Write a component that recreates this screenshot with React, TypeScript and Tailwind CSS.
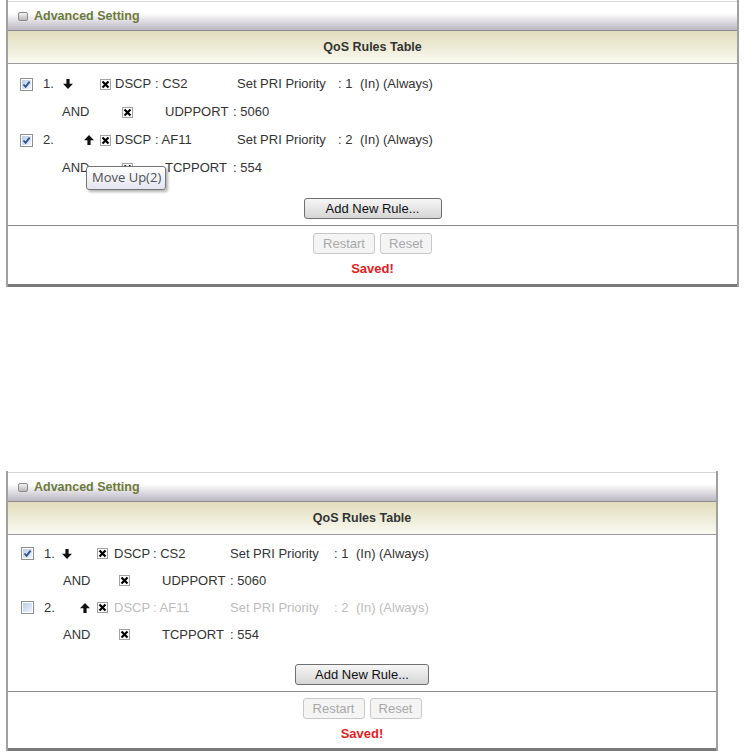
import React from "react";

const font = { fontFamily: '"Liberation Sans", Arial, sans-serif' };

function CheckBox({ checked }: { checked: boolean }) {
  return (
    <span className="relative inline-flex h-[13px] w-[13px] items-center justify-center border border-[#8e8f8f] bg-white">
      <span className="h-[9px] w-[9px] bg-gradient-to-br from-[#b9cfe6] to-[#eef4fb]" />
      {checked && (
        <svg className="absolute left-0 top-0" width="11" height="11" viewBox="0 0 11 11">
          <path d="M2.5 5.5 L4.6 7.8 L8.6 2.6" fill="none" stroke="#2c4f8f" strokeWidth="1.8" />
        </svg>
      )}
    </span>
  );
}

function XBox() {
  return (
    <svg width="11" height="11" viewBox="0 0 11 11" className="inline-block">
      <rect x="0.5" y="0.5" width="10" height="10" fill="#fff" stroke="#444" strokeWidth="1" strokeDasharray="1 1" />
      <path d="M2.5 2.5 L8.5 8.5 M8.5 2.5 L2.5 8.5" stroke="#000" strokeWidth="2.2" />
    </svg>
  );
}

function ArrowDown() {
  return (
    <svg width="10" height="10" viewBox="0 0 10 10" className="inline-block">
      <path d="M5 10 L0 4.8 H3.4 V0 H6.6 V4.8 H10 Z" fill="#111" />
    </svg>
  );
}

function ArrowUp() {
  return (
    <svg width="10" height="10" viewBox="0 0 10 10" className="inline-block">
      <path d="M5 0 L0 5.2 H3.4 V10 H6.6 V5.2 H10 Z" fill="#111" />
    </svg>
  );
}

type Cols = {
  row: string;
  pad: string;
  cb: string;
  num: string;
  down: string;
  up: string;
  x: string;
  label: string;
  value: string;
  spp: string;
  pv: string;
  inn: string;
  andPad: string;
  and: string;
  andX: string;
  port: string;
};

const topCols: Cols = {
  row: "h-[28px]",
  pad: "pl-[12px]",
  cb: "w-[23px]",
  num: "w-[20px]",
  down: "w-[21px]",
  up: "w-[16px]",
  x: "w-[15px]",
  label: "w-[40px]",
  value: "w-[82px]",
  spp: "w-[101px]",
  pv: "w-[22px]",
  inn: "w-[23px]",
  andPad: "pl-[54px]",
  and: "w-[60px]",
  andX: "w-[43px]",
  port: "w-[68px]",
};

const botCols: Cols = {
  row: "h-[27px]",
  pad: "pl-[13px]",
  cb: "w-[23px]",
  num: "w-[18px]",
  down: "w-[18px]",
  up: "w-[17px]",
  x: "w-[17px]",
  label: "w-[39px]",
  value: "w-[77px]",
  spp: "w-[104px]",
  pv: "w-[22px]",
  inn: "w-[23px]",
  andPad: "pl-[55px]",
  and: "w-[56px]",
  andX: "w-[43px]",
  port: "w-[68px]",
};

type Rule = {
  n: number;
  checked: boolean;
  down: boolean;
  up: boolean;
  val: string;
  pri: string;
  port: string;
  portVal: string;
  dim: boolean;
};

function RuleRows({ r, c }: { r: Rule; c: Cols }) {
  const main = r.dim ? "text-[#bdbdbd]" : "text-[#333]";
  return (
    <>
      <div className={`flex ${c.row} items-center ${c.pad}`}>
        <span className={`${c.cb} flex items-center`}>
          <CheckBox checked={r.checked} />
        </span>
        <span className={`${c.num} text-[#333]`}>{r.n}.</span>
        <span className={`${c.down} flex items-center`}>{r.down && <ArrowDown />}</span>
        <span className={`${c.up} flex items-center`}>{r.up && <ArrowUp />}</span>
        <span className={`${c.x} flex items-center`}>
          <XBox />
        </span>
        <span className={`${c.label} ${main}`}>DSCP</span>
        <span className={`${c.value} ${main}`}>: {r.val}</span>
        <span className={`${c.spp} ${main}`}>Set PRI Priority</span>
        <span className={`${c.pv} ${main}`}>: {r.pri}</span>
        <span className={`${c.inn} ${main}`}>(In)</span>
        <span className={`${main}`}>(Always)</span>
      </div>
      <div className={`flex ${c.row} items-center ${c.andPad} text-[#333]`}>
        <span className={c.and}>AND</span>
        <span className={`${c.andX} flex items-center`}>
          <XBox />
        </span>
        <span className={c.port}>{r.port}</span>
        <span>: {r.portVal}</span>
      </div>
    </>
  );
}

function Panel({
  rules,
  c,
  width,
  tooltip,
  rowsPad,
  btnGap,
  btnW,
  sepGap,
  savedH,
}: {
  rules: Rule[];
  c: Cols;
  width: string;
  tooltip?: boolean;
  rowsPad: string;
  btnGap: string;
  btnW: string;
  sepGap: string;
  savedH: string;
}) {
  return (
    <div className={`relative ml-[6px] ${width} border-x-2 border-[#a0a0a0] bg-white text-[13px]`} style={font}>
      <div className="h-[2px] border-b border-[#d6d6d6] bg-white" />
      <div className="flex h-[29px] items-center gap-[6px] border-b border-[#8f8c94] bg-gradient-to-b from-white from-40% to-[#bbb7c2] pl-[10px]">
        <span className="inline-block h-[9px] w-[10px] rounded-[2px] border border-[#8a8a8a] bg-gradient-to-b from-[#f2f2f2] to-[#b9b9b9]" />
        <span className="text-[12.5px] font-bold text-[#6b7a3a]">Advanced Setting</span>
      </div>
      <div className="flex h-[33px] items-center justify-center border-b border-[#9a9a9a] bg-gradient-to-b from-[#e1ddbc] to-[#fafaf2] text-[12.5px] font-bold text-[#333]">
        QoS Rules Table
      </div>
      <div className={rowsPad}>
        {rules.map((r) => (
          <RuleRows key={r.n} r={r} c={c} />
        ))}
      </div>
      <div className={`flex justify-center ${btnGap} pb-[6px]`}>
        <button className={`box-border h-[21px] ${btnW} rounded-[3px] border border-[#707070] bg-gradient-to-b from-[#f6f6f6] to-[#d6d6d6] text-[13px] leading-none text-[#111]`}>
          Add New Rule...
        </button>
      </div>
      <div className={`border-t border-[#8a8a8a] ${sepGap}`}>
        <div className="flex justify-center gap-[5px]">
          <button className="box-border h-[21px] w-[62px] rounded-[3px] border border-[#c8c8c8] bg-[#f4f4f4] text-[13px] leading-none text-[#a8a8a8]">
            Restart
          </button>
          <button className="box-border h-[21px] w-[52px] rounded-[3px] border border-[#c8c8c8] bg-[#f4f4f4] text-[13px] leading-none text-[#a8a8a8]">
            Reset
          </button>
        </div>
        <div className={`flex ${savedH} items-center justify-center text-[13px] font-bold text-[#e41e1e]`}>Saved!</div>
      </div>
      <div className="h-[3px] bg-[#7a7a7a]" />
      {tooltip && (
        <div
          className="absolute left-[78px] top-[166px] flex h-[24px] w-[80px] items-center rounded-[3px] border border-[#767676] bg-gradient-to-b from-white to-[#e4e5f0] pl-[5px] text-[13px] text-[#505050] shadow-[2px_2px_3px_rgba(0,0,0,0.3)]"
          style={{ fontFamily: '"Open Sans", "DejaVu Sans", sans-serif' }}
        >
          Move Up(2)
        </div>
      )}
    </div>
  );
}

export default function App() {
  const topRules: Rule[] = [
    { n: 1, checked: true, down: true, up: false, val: "CS2", pri: "1", port: "UDPPORT", portVal: "5060", dim: false },
    { n: 2, checked: true, down: false, up: true, val: "AF11", pri: "2", port: "TCPPORT", portVal: "554", dim: false },
  ];
  const botRules: Rule[] = [
    { n: 1, checked: true, down: true, up: false, val: "CS2", pri: "1", port: "UDPPORT", portVal: "5060", dim: false },
    { n: 2, checked: false, down: false, up: true, val: "AF11", pri: "2", port: "TCPPORT", portVal: "554", dim: true },
  ];
  return (
    <div className="min-h-[754px] w-[746px] bg-white">
      <Panel
        rules={topRules}
        c={topCols}
        width="w-[733px]"
        tooltip
        rowsPad="pt-[6px]"
        btnGap="pt-[16px]"
        btnW="w-[138px]"
        sepGap="pt-[7px]"
        savedH="h-[30px]"
      />
      <div className="h-[184px]" />
      <Panel
        rules={botRules}
        c={botCols}
        width="w-[712px]"
        rowsPad="pt-[5px]"
        btnGap="pt-[16px]"
        btnW="w-[134px]"
        sepGap="pt-[6px]"
        savedH="h-[29px]"
      />
    </div>
  );
}
